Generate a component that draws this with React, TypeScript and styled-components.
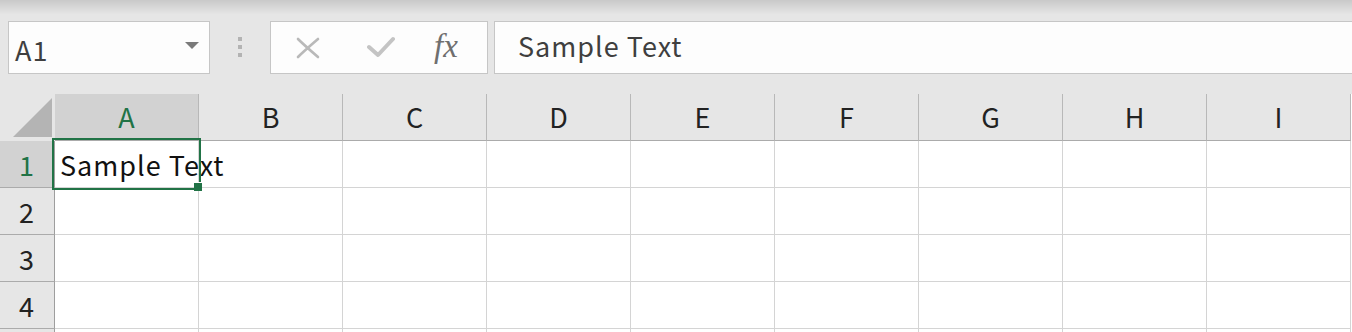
import React from 'react';
import styled, { createGlobalStyle } from 'styled-components';

const GlobalStyle = createGlobalStyle`
  html, body {
    margin: 0;
    padding: 0;
    background: #e6e6e6;
    overflow: hidden;
  }
  body {
    font-family: "Noto Sans CJK JP", "Noto Sans", sans-serif;
  }
`;

const Window = styled.div`
  width: 1352px;
  height: 332px;
  overflow: hidden;
  background: #e6e6e6;
`;

const TopShade = styled.div`
  height: 14px;
  background: linear-gradient(#c9c9c9, #e5e5e5);
`;

const Toolbar = styled.div`
  display: flex;
  align-items: stretch;
  height: 53px;
  padding: 7px 0 0 8px;
`;

const Box = styled.div`
  box-sizing: border-box;
  height: 53px;
  background: #fdfdfd;
  border: 1px solid #c6c6c6;
  display: flex;
  align-items: center;
`;

const NameBox = styled(Box)`
  width: 202px;
  padding: 4px 10px 0 6px;
  justify-content: space-between;
  font-size: 27px;
  letter-spacing: 1px;
  color: #3f3f3f;
`;

const DropArrow = styled.span`
  width: 0;
  height: 0;
  margin-top: -8px;
  border-left: 7px solid transparent;
  border-right: 7px solid transparent;
  border-top: 7px solid #7a7a7a;
`;

const Grip = styled.div`
  width: 60px;
  display: flex;
  flex-direction: column;
  align-items: center;
  padding-top: 16px;
  gap: 4px;
`;

const GripDot = styled.span`
  width: 4px;
  height: 4px;
  background: #b3b3b3;
`;

const FormulaButtons = styled(Box)`
  width: 218px;
  margin-right: 6px;
  padding-left: 25px;
`;

const IconSlot = styled.div<{ $w: number }>`
  width: ${(p) => p.$w}px;
  display: flex;
  align-items: center;
`;

const Fx = styled.span`
  font-family: "Liberation Serif", "Times New Roman", serif;
  font-style: italic;
  font-size: 33px;
  color: #6f6f6f;
  margin-top: -3px;
  margin-left: -3px;
`;

const FormulaInput = styled(Box)`
  flex: 1;
  margin-right: -10px;
  padding: 0 0 4px 23px;
  font-size: 27px;
  letter-spacing: 1px;
  color: #3f3f3f;
`;

const Sheet = styled.div`
  margin-top: 20px;
  display: grid;
  grid-template-columns: 55px repeat(9, 144px);
  grid-auto-rows: 47px;
  background: #ffffff;
`;

const Corner = styled.div`
  background: #e6e6e6;
  display: flex;
  align-items: flex-start;
  padding: 4px 0 0 13px;
`;

const ColHeader = styled.div<{ $active?: boolean }>`
  box-sizing: border-box;
  background: ${(p) => (p.$active ? '#d2d2d2' : '#e6e6e6')};
  color: ${(p) => (p.$active ? '#217346' : '#222222')};
  border-right: 1px solid #b8b8b8;
  border-bottom: 1px solid #ababab;
  display: flex;
  align-items: center;
  justify-content: center;
  font-size: 27px;
  padding-bottom: 2px;
`;

const RowHeader = styled.div<{ $active?: boolean }>`
  box-sizing: border-box;
  background: ${(p) => (p.$active ? '#d2d2d2' : '#e6e6e6')};
  color: ${(p) => (p.$active ? '#217346' : '#222222')};
  border-right: 1px solid #9e9e9e;
  border-bottom: 1px solid #ababab;
  display: flex;
  align-items: center;
  justify-content: center;
  font-size: 27px;
  padding-right: 1px;
`;

const Cell = styled.div`
  position: relative;
  box-sizing: border-box;
  border-right: 1px solid #d4d4d4;
  border-bottom: 1px solid #d4d4d4;
  display: flex;
  align-items: center;
  padding-left: 5px;
  white-space: nowrap;
  font-size: 27px;
  letter-spacing: 1px;
  color: #111111;
`;

const Selection = styled.div`
  position: absolute;
  left: -3px;
  top: -3px;
  width: 149px;
  height: 52px;
  box-sizing: border-box;
  border: 2px solid #217346;
  pointer-events: none;
`;

const FillHandle = styled.span`
  position: absolute;
  z-index: 1;
  left: 139px;
  top: 42px;
  width: 8px;
  height: 8px;
  background: #217346;
  box-shadow: 0 -1px 0 #ffffff;
`;

const columns = ['A', 'B', 'C', 'D', 'E', 'F', 'G', 'H', 'I'];
// row 5 only peeks in at the bottom edge, so its number stays out of view
const rows = [1, 2, 3, 4, 5];

const CancelIcon = () => (
  <svg width="24" height="22" viewBox="0 0 24 22">
    <path d="M2 2 C8 8 15 14 22 20 M22 2 C15 8 8 14 2 20" stroke="#b9b9b9" strokeWidth="2.6" fill="none" strokeLinecap="round" />
  </svg>
);

const EnterIcon = () => (
  <svg width="28" height="24" viewBox="0 0 28 24">
    <path d="M2 11 L11 19 L26 3" stroke="#c4c4c4" strokeWidth="4" fill="none" strokeLinecap="round" strokeLinejoin="round" />
  </svg>
);

const CornerMark = () => (
  <svg width="39" height="39" viewBox="0 0 39 39">
    <polygon points="39,0 39,39 0,39" fill="#b4b4b4" />
  </svg>
);

export default function App() {
  return (
    <Window>
      <GlobalStyle />
      <TopShade />
      <Toolbar>
        <NameBox>
          <span>A1</span>
          <DropArrow />
        </NameBox>
        <Grip>
          <GripDot />
          <GripDot />
          <GripDot />
        </Grip>
        <FormulaButtons>
          <IconSlot $w={71}>
            <CancelIcon />
          </IconSlot>
          <IconSlot $w={70}>
            <EnterIcon />
          </IconSlot>
          <IconSlot $w={40}>
            <Fx>fx</Fx>
          </IconSlot>
        </FormulaButtons>
        <FormulaInput>Sample Text</FormulaInput>
      </Toolbar>
      <Sheet>
        <Corner>
          <CornerMark />
        </Corner>
        {columns.map((c) => (
          <ColHeader key={c} $active={c === 'A'}>
            {c}
          </ColHeader>
        ))}
        {rows.map((r) => (
          <React.Fragment key={r}>
            <RowHeader $active={r === 1}>{r < 5 ? r : null}</RowHeader>
            {columns.map((c) => (
              <Cell key={c}>
                {r === 1 && c === 'A' && (
                  <>
                    Sample Text
                    <Selection />
                    <FillHandle />
                  </>
                )}
              </Cell>
            ))}
          </React.Fragment>
        ))}
      </Sheet>
    </Window>
  );
}
